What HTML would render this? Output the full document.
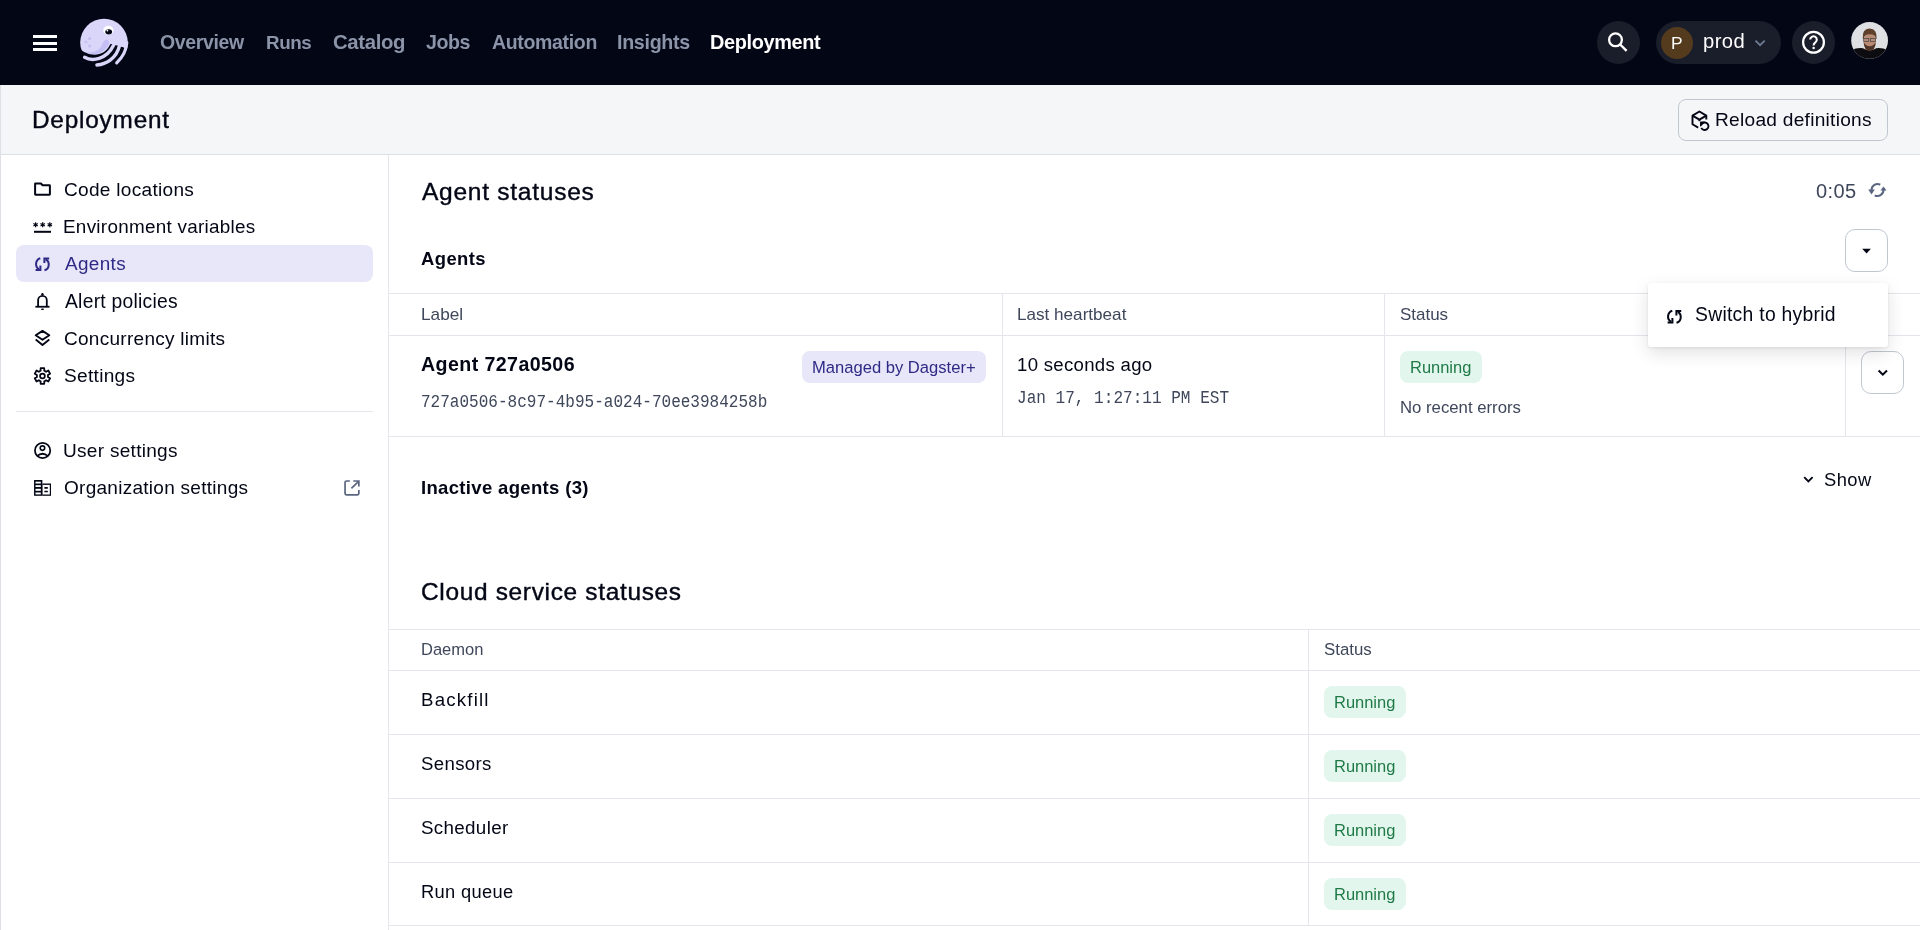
<!DOCTYPE html>
<html><head><meta charset="utf-8"><style>
html,body{margin:0;padding:0;width:1920px;height:930px;overflow:hidden;background:#fff}
.a{position:absolute}
.t{position:absolute;white-space:nowrap;will-change:transform}
.bm{display:inline-block;width:0;height:0;vertical-align:baseline}
svg{position:absolute;overflow:visible}
</style></head><body>
<div class="a" style="left:0px;top:0px;width:1920px;height:85px;background:#030615"></div>
<div class="a" style="left:33px;top:35px;width:24px;height:3px;background:#fff"></div>
<div class="a" style="left:33px;top:41.5px;width:24px;height:3px;background:#fff"></div>
<div class="a" style="left:33px;top:48px;width:24px;height:3px;background:#fff"></div>
<div class="a" style="left:1597px;top:21px;width:43px;height:43px;background:#1a1d2a;border-radius:50%"></div>
<div class="a" style="left:1656px;top:21px;width:125px;height:43px;background:#1a1d2a;border-radius:22px"></div>
<div class="a" style="left:1661px;top:27px;width:32px;height:32px;background:#553b1e;border-radius:50%"></div>
<div class="a" style="left:1792px;top:21px;width:43px;height:43px;background:#1a1d2a;border-radius:50%"></div>
<div class="a" style="left:0px;top:85px;width:1920px;height:69px;background:#f5f6f8"></div>
<div class="a" style="left:0px;top:154px;width:1920px;height:1px;background:#dcdfe5"></div>
<div class="a" style="left:0px;top:85px;width:1px;height:845px;background:#dfe0e5"></div>
<div class="a" style="left:1678px;top:99px;width:210px;height:42px;border:1px solid #c1c7d1;border-radius:8px;box-sizing:border-box"></div>
<div class="a" style="left:388px;top:155px;width:1px;height:775px;background:#e4e6eb"></div>
<div class="a" style="left:16px;top:245px;width:357px;height:37px;background:#e8e6f9;border-radius:8px"></div>
<div class="a" style="left:16px;top:411px;width:357px;height:1px;background:#e4e6eb"></div>
<div class="a" style="left:389px;top:293px;width:1531px;height:1px;background:#e4e6eb"></div>
<div class="a" style="left:389px;top:335px;width:1531px;height:1px;background:#e4e6eb"></div>
<div class="a" style="left:389px;top:436px;width:1531px;height:1px;background:#e4e6eb"></div>
<div class="a" style="left:1002px;top:294px;width:1px;height:142px;background:#e4e6eb"></div>
<div class="a" style="left:1384px;top:294px;width:1px;height:142px;background:#e4e6eb"></div>
<div class="a" style="left:1845px;top:294px;width:1px;height:142px;background:#e4e6eb"></div>
<div class="a" style="left:1845px;top:229px;width:43px;height:43px;border:1px solid #c1c7d1;border-radius:10px;box-sizing:border-box"></div>
<div class="a" style="left:1861px;top:351px;width:43px;height:43px;border:1px solid #c1c7d1;border-radius:10px;box-sizing:border-box"></div>
<div class="a" style="left:802px;top:351px;width:184px;height:32px;background:#e8e6f9;border-radius:8px"></div>
<div class="a" style="left:1400px;top:351px;width:82px;height:32px;background:#e3f6ee;border-radius:8px"></div>
<div class="a" style="left:389px;top:629px;width:1531px;height:1px;background:#e4e6eb"></div>
<div class="a" style="left:389px;top:670px;width:1531px;height:1px;background:#e4e6eb"></div>
<div class="a" style="left:389px;top:734px;width:1531px;height:1px;background:#e4e6eb"></div>
<div class="a" style="left:389px;top:798px;width:1531px;height:1px;background:#e4e6eb"></div>
<div class="a" style="left:389px;top:862px;width:1531px;height:1px;background:#e4e6eb"></div>
<div class="a" style="left:389px;top:925px;width:1531px;height:1px;background:#e4e6eb"></div>
<div class="a" style="left:1308px;top:630px;width:1px;height:295px;background:#e4e6eb"></div>
<div class="a" style="left:1324px;top:686px;width:82px;height:32px;background:#e3f6ee;border-radius:8px"></div>
<div class="a" style="left:1324px;top:750px;width:82px;height:32px;background:#e3f6ee;border-radius:8px"></div>
<div class="a" style="left:1324px;top:814px;width:82px;height:32px;background:#e3f6ee;border-radius:8px"></div>
<div class="a" style="left:1324px;top:878px;width:82px;height:32px;background:#e3f6ee;border-radius:8px"></div>
<div class="a" style="left:1648px;top:283px;width:240px;height:64px;background:#fff;border-radius:3px;box-shadow:0 1px 3px rgba(3,6,21,0.08),0 6px 18px rgba(3,6,21,0.12)"></div>
<div class="t" id="nav_overview" style="left:160.02px;top:29.90px;font-family:'Liberation Sans';font-weight:700;font-size:19.48px;line-height:24px;color:#8b94a8;letter-spacing:-0.357px">Overview<span class="bm"></span></div>
<div class="t" id="nav_runs" style="left:266.28px;top:30.90px;font-family:'Liberation Sans';font-weight:700;font-size:18.79px;line-height:23px;color:#8b94a8;letter-spacing:-0.436px">Runs<span class="bm"></span></div>
<div class="t" id="nav_catalog" style="left:332.94px;top:29.90px;font-family:'Liberation Sans';font-weight:700;font-size:20.34px;line-height:25px;color:#8b94a8;letter-spacing:-0.352px">Catalog<span class="bm"></span></div>
<div class="t" id="nav_jobs" style="left:426.36px;top:29.90px;font-family:'Liberation Sans';font-weight:700;font-size:19.65px;line-height:25px;color:#8b94a8;letter-spacing:-0.433px">Jobs<span class="bm"></span></div>
<div class="t" id="nav_automation" style="left:491.91px;top:29.90px;font-family:'Liberation Sans';font-weight:700;font-size:19.52px;line-height:24px;color:#8b94a8;letter-spacing:-0.345px">Automation<span class="bm"></span></div>
<div class="t" id="nav_insights" style="left:616.62px;top:29.90px;font-family:'Liberation Sans';font-weight:700;font-size:19.66px;line-height:25px;color:#8b94a8;letter-spacing:-0.304px">Insights<span class="bm"></span></div>
<div class="t" id="nav_deployment" style="left:709.61px;top:29.91px;font-family:'Liberation Sans';font-weight:700;font-size:19.91px;line-height:25px;color:#ffffff;letter-spacing:-0.363px">Deployment<span class="bm"></span></div>
<div class="t" id="prod" style="left:1702.58px;top:29.21px;font-family:'Liberation Sans';font-weight:400;font-size:20.23px;line-height:25px;color:#ffffff;letter-spacing:0.390px">prod<span class="bm"></span></div>
<div class="t" id="P" style="left:1671.31px;top:32.00px;font-family:'Liberation Sans';font-weight:400;font-size:17.36px;line-height:22px;color:#ffffff">P<span class="bm"></span></div>
<div class="t" id="title" style="left:31.66px;top:105.00px;font-family:'Liberation Sans';font-weight:400;font-size:24.30px;line-height:30px;color:#030615;letter-spacing:0.825px;-webkit-text-stroke:0.4px #030615">Deployment<span class="bm"></span></div>
<div class="t" id="reload" style="left:1715.07px;top:108.41px;font-family:'Liberation Sans';font-weight:400;font-size:19.13px;line-height:24px;color:#030615;letter-spacing:0.272px">Reload definitions<span class="bm"></span></div>
<div class="t" id="s_code" style="left:63.55px;top:177.91px;font-family:'Liberation Sans';font-weight:400;font-size:19.06px;line-height:24px;color:#030615;letter-spacing:0.296px">Code locations<span class="bm"></span></div>
<div class="t" id="s_env" style="left:62.99px;top:214.61px;font-family:'Liberation Sans';font-weight:400;font-size:18.87px;line-height:24px;color:#030615;letter-spacing:0.285px">Environment variables<span class="bm"></span></div>
<div class="t" id="s_agents" style="left:64.50px;top:251.71px;font-family:'Liberation Sans';font-weight:400;font-size:18.90px;line-height:24px;color:#2e2a85;letter-spacing:0.360px">Agents<span class="bm"></span></div>
<div class="t" id="s_alert" style="left:64.50px;top:289.90px;font-family:'Liberation Sans';font-weight:400;font-size:19.30px;line-height:24px;color:#030615;letter-spacing:0.258px">Alert policies<span class="bm"></span></div>
<div class="t" id="s_conc" style="left:63.55px;top:326.91px;font-family:'Liberation Sans';font-weight:400;font-size:19.01px;line-height:24px;color:#030615;letter-spacing:0.281px">Concurrency limits<span class="bm"></span></div>
<div class="t" id="s_settings" style="left:63.55px;top:364.01px;font-family:'Liberation Sans';font-weight:400;font-size:19.10px;line-height:24px;color:#030615;letter-spacing:0.298px">Settings<span class="bm"></span></div>
<div class="t" id="s_user" style="left:62.88px;top:439.00px;font-family:'Liberation Sans';font-weight:400;font-size:19.06px;line-height:24px;color:#030615;letter-spacing:0.281px">User settings<span class="bm"></span></div>
<div class="t" id="s_org" style="left:63.55px;top:476.01px;font-family:'Liberation Sans';font-weight:400;font-size:19.00px;line-height:24px;color:#030615;letter-spacing:0.274px">Organization settings<span class="bm"></span></div>
<div class="t" id="h_agentstat" style="left:421.80px;top:176.21px;font-family:'Liberation Sans';font-weight:400;font-size:24.56px;line-height:31px;color:#030615;letter-spacing:0.723px;-webkit-text-stroke:0.4px #030615">Agent statuses<span class="bm"></span></div>
<div class="t" id="timer" style="left:1815.95px;top:178.70px;font-family:'Liberation Sans';font-weight:400;font-size:20.03px;line-height:25px;color:#3f475b;letter-spacing:0.384px">0:05<span class="bm"></span></div>
<div class="t" id="h_agents" style="left:421.25px;top:246.60px;font-family:'Liberation Sans';font-weight:700;font-size:18.40px;line-height:23px;color:#030615;letter-spacing:0.443px">Agents<span class="bm"></span></div>
<div class="t" id="th_label" style="left:421.02px;top:302.80px;font-family:'Liberation Sans';font-weight:400;font-size:17.22px;line-height:22px;color:#3f475b">Label<span class="bm"></span></div>
<div class="t" id="th_hb" style="left:1016.63px;top:303.81px;font-family:'Liberation Sans';font-weight:400;font-size:17.12px;line-height:21px;color:#3f475b">Last heartbeat<span class="bm"></span></div>
<div class="t" id="th_status" style="left:1399.90px;top:303.81px;font-family:'Liberation Sans';font-weight:400;font-size:16.98px;line-height:21px;color:#3f475b">Status<span class="bm"></span></div>
<div class="t" id="agent_name" style="left:421.31px;top:352.01px;font-family:'Liberation Sans';font-weight:700;font-size:19.63px;line-height:25px;color:#030615;letter-spacing:0.410px">Agent 727a0506<span class="bm"></span></div>
<div class="t" id="uuid" style="left:421.02px;top:392.92px;font-family:'Liberation Mono';font-weight:400;font-size:16.04px;line-height:20px;color:#3f475b;transform:scaleY(1.09);transform-origin:0 14.27px">727a0506-8c97-4b95-a024-70ee3984258b<span class="bm"></span></div>
<div class="t" id="managed" style="left:811.57px;top:357.22px;font-family:'Liberation Sans';font-weight:400;font-size:16.59px;line-height:21px;color:#2e2a85">Managed by Dagster+<span class="bm"></span></div>
<div class="t" id="ago" style="left:1016.61px;top:353.01px;font-family:'Liberation Sans';font-weight:400;font-size:18.59px;line-height:23px;color:#030615;letter-spacing:0.307px">10 seconds ago<span class="bm"></span></div>
<div class="t" id="date" style="left:1016.55px;top:389.03px;font-family:'Liberation Mono';font-weight:400;font-size:16.07px;line-height:20px;color:#3f475b;transform:scaleY(1.09);transform-origin:0 14.28px">Jan 17, 1:27:11 PM EST<span class="bm"></span></div>
<div class="t" id="run1" style="left:1410.38px;top:356.91px;font-family:'Liberation Sans';font-weight:400;font-size:16.48px;line-height:21px;color:#1f7a47">Running<span class="bm"></span></div>
<div class="t" id="noerr" style="left:1399.66px;top:396.91px;font-family:'Liberation Sans';font-weight:400;font-size:16.74px;line-height:21px;color:#3f475b">No recent errors<span class="bm"></span></div>
<div class="t" id="switch" style="left:1694.53px;top:302.22px;font-family:'Liberation Sans';font-weight:400;font-size:19.34px;line-height:24px;color:#030615;letter-spacing:0.277px">Switch to hybrid<span class="bm"></span></div>
<div class="t" id="inactive" style="left:420.70px;top:475.51px;font-family:'Liberation Sans';font-weight:700;font-size:18.55px;line-height:23px;color:#030615;letter-spacing:0.322px">Inactive agents (3)<span class="bm"></span></div>
<div class="t" id="show" style="left:1824.28px;top:468.01px;font-family:'Liberation Sans';font-weight:400;font-size:18.33px;line-height:23px;color:#030615;letter-spacing:0.463px">Show<span class="bm"></span></div>
<div class="t" id="cloud" style="left:420.78px;top:575.71px;font-family:'Liberation Sans';font-weight:400;font-size:24.45px;line-height:31px;color:#030615;letter-spacing:0.676px;-webkit-text-stroke:0.4px #030615">Cloud service statuses<span class="bm"></span></div>
<div class="t" id="th_daemon" style="left:420.88px;top:638.81px;font-family:'Liberation Sans';font-weight:400;font-size:16.53px;line-height:21px;color:#3f475b">Daemon<span class="bm"></span></div>
<div class="t" id="th_status2" style="left:1323.86px;top:639.21px;font-family:'Liberation Sans';font-weight:400;font-size:16.84px;line-height:21px;color:#3f475b">Status<span class="bm"></span></div>
<div class="t" id="backfill" style="left:420.91px;top:687.80px;font-family:'Liberation Sans';font-weight:400;font-size:18.67px;line-height:23px;color:#030615;letter-spacing:1.203px">Backfill<span class="bm"></span></div>
<div class="t" id="sensors" style="left:421.27px;top:751.80px;font-family:'Liberation Sans';font-weight:400;font-size:18.61px;line-height:23px;color:#030615;letter-spacing:0.344px">Sensors<span class="bm"></span></div>
<div class="t" id="scheduler" style="left:421.06px;top:815.81px;font-family:'Liberation Sans';font-weight:400;font-size:18.79px;line-height:23px;color:#030615;letter-spacing:0.323px">Scheduler<span class="bm"></span></div>
<div class="t" id="runqueue" style="left:420.54px;top:879.81px;font-family:'Liberation Sans';font-weight:400;font-size:18.30px;line-height:23px;color:#030615;letter-spacing:0.338px">Run queue<span class="bm"></span></div>
<div class="t" id="run2" style="left:1334.38px;top:692.01px;font-family:'Liberation Sans';font-weight:400;font-size:16.48px;line-height:21px;color:#1f7a47">Running<span class="bm"></span></div>
<div class="t" id="run3" style="left:1334.38px;top:756.01px;font-family:'Liberation Sans';font-weight:400;font-size:16.48px;line-height:21px;color:#1f7a47">Running<span class="bm"></span></div>
<div class="t" id="run4" style="left:1334.38px;top:820.01px;font-family:'Liberation Sans';font-weight:400;font-size:16.48px;line-height:21px;color:#1f7a47">Running<span class="bm"></span></div>
<div class="t" id="run5" style="left:1334.38px;top:884.01px;font-family:'Liberation Sans';font-weight:400;font-size:16.48px;line-height:21px;color:#1f7a47">Running<span class="bm"></span></div>
<svg style="left:76px;top:15px" width="56" height="56" viewBox="76 15 56 56"><g transform="translate(76 15)">
<circle cx="28" cy="27.5" r="23.8" fill="#d9d6fa"/>
<path d="M10 36.8 C16 40.8 26 40.5 32.5 30 C34 27 32.5 24.3 29.8 24.8 C27.5 25.3 27 28 25.5 31 C22 36.6 16 38.6 10 36.8 Z" fill="#c4bff4"/>
<circle cx="13.6" cy="23.5" r="1.5" fill="#c4bff4"/>
<circle cx="9.9" cy="27.1" r="1.5" fill="#c4bff4"/>
<circle cx="13.6" cy="31" r="1.5" fill="#c4bff4"/>
<ellipse cx="32.4" cy="15.3" rx="5.1" ry="4.6" fill="#fff"/>
<ellipse cx="32.7" cy="16.8" rx="3.4" ry="2.6" fill="#030615"/>
<circle cx="31.4" cy="15.6" r="0.9" fill="#fff"/>
<path d="M3 33 C11 41.5 28 43.5 34.2 29.3 Q35.5 28.4 36.5 29.6 L40 30.6 Q41.3 29.8 42.2 31.2 L46.2 32 Q47.3 31.5 48 33 L50 36 L60 36 L60 60 L-4 60 L-4 33 Z" fill="#030615"/>
<path d="M8.6 42.3 C16 46.6 30.5 44.8 37.4 30.6" stroke="#d9d6fa" stroke-width="3.4" fill="none" stroke-linecap="round"/>
<path d="M20.9 50 C30 49.5 40.5 43.5 43.6 30.4" stroke="#d9d6fa" stroke-width="3.4" fill="none" stroke-linecap="round"/>
<path d="M40.7 47.9 C45.5 43.2 50.3 37 50.8 27.5" stroke="#d9d6fa" stroke-width="3.2" fill="none" stroke-linecap="round"/>
</g></svg>
<svg style="left:1597px;top:21px" width="43" height="43" viewBox="1597 21 43 43"><circle cx="1615.5" cy="39.8" r="6.4" stroke="#fff" stroke-width="2.3" fill="none"/><path d="M1620.2 44.5 L1626.6 50.9" stroke="#fff" stroke-width="2.4" stroke-linecap="butt"/></svg>
<svg style="left:1750px;top:35px" width="20" height="15" viewBox="1750 35 20 15"><path d="M1755.5 40.6 L1760.1 45.1 L1764.7 40.6" stroke="#6e7a91" stroke-width="1.9" fill="none"/></svg>
<svg style="left:1797px;top:26px" width="33" height="33" viewBox="1797 26 33 33"><circle cx="1813.5" cy="42.25" r="10.4" stroke="#fff" stroke-width="2.2" fill="none"/><path d="M1810.2 39.6 A3.3 3.3 0 1 1 1815.4 42.3 C1814.1 43.1 1813.6 43.8 1813.6 45.6" stroke="#fff" stroke-width="2.1" fill="none"/><circle cx="1813.6" cy="48" r="1.25" fill="#fff"/></svg>
<svg style="left:1850px;top:21px" width="40" height="40" viewBox="1850 21 40 40"><defs><clipPath id="avc"><circle cx="1869.6" cy="40.4" r="18.4"/></clipPath></defs>
<g clip-path="url(#avc)"><rect x="1850" y="21" width="40" height="40" fill="#dfe0e3"/>
<ellipse cx="1869.6" cy="49.5" rx="4.8" ry="3.5" fill="#b08270"/>
<path d="M1849 51.5 Q1856 47.2 1863 48.2 Q1869.6 53 1876.2 48.2 Q1883 47.2 1890 51.5 V62 H1849 Z" fill="#0d0d11"/>
<ellipse cx="1869.7" cy="41.5" rx="6.3" ry="8" fill="#b98a74"/>
<path d="M1863.7 42.5 Q1864.2 50.6 1869.7 50.6 Q1875.2 50.6 1875.7 42.5 Q1873.5 46.2 1869.7 46.2 Q1866 46.2 1863.7 42.5 Z" fill="#4e3527"/>
<path d="M1862.8 39 Q1861.8 28.8 1869.6 28.6 Q1877.4 28.8 1876.6 39 L1875.8 39 Q1875.5 34.2 1869.7 34.2 Q1864 34.2 1863.7 39 Z" fill="#5e402b"/>
<rect x="1863.7" y="38.4" width="5" height="3" fill="none" stroke="#48484a" stroke-width="0.75"/>
<rect x="1870.6" y="38.4" width="5" height="3" fill="none" stroke="#48484a" stroke-width="0.75"/>
</g></svg>
<svg style="left:1686px;top:106px" width="30" height="30" viewBox="1686 106 30 30"><g transform="translate(1686 106)" stroke="#030615" stroke-width="1.9" fill="none" stroke-linejoin="round">
<path d="M20.3 13.6 V9.6 L13.4 5.5 L6.5 9.6 V18.3 L12.2 21.6"/>
<path d="M6.5 9.6 L13.4 13.6 L20.3 9.6"/>
<path d="M13.4 13.6 V15.2"/>
<path d="M16 17.6 A3.75 3.75 0 1 1 15.3 21.8"/>
</g><path d="M1700.6 122.1 L1704.3 122.1 L1700.6 125.8 Z" fill="#030615" stroke="#030615" stroke-width="1.2" stroke-linejoin="round"/></svg>
<svg style="left:1860px;top:176px" width="32" height="28" viewBox="1860 176 32 28"><path d="M1880.32 184.70 A6.0 6.0 0 0 0 1871.50 190.00" stroke="#5a6680" stroke-width="2" fill="none"/>
<path d="M1868.2 189.6 L1874.8 189.6 L1871.5 194.4 Z" fill="#5a6680"/>
<path d="M1874.68 195.30 A6.0 6.0 0 0 0 1883.50 190.00" stroke="#5a6680" stroke-width="2" fill="none"/>
<path d="M1880.4 190.6 L1886.6 190.6 L1883.5 186.4 Z" fill="#5a6680"/></svg>
<svg style="left:1855px;top:240px" width="20" height="20" viewBox="1855 240 20 20"><path d="M1862.2 248.7 L1870.9 248.7 L1866.55 253.4 Z" fill="#030615"/></svg>
<svg style="left:1872px;top:362px" width="20" height="20" viewBox="1872 362 20 20"><path d="M1878.6 370.5 L1882.8 374.7 L1887 370.5" stroke="#030615" stroke-width="2" fill="none"/></svg>
<svg style="left:1798px;top:470px" width="20" height="20" viewBox="1798 470 20 20"><path d="M1804.2 477.1 L1808.4 481.3 L1812.6 477.1" stroke="#030615" stroke-width="1.9" fill="none"/></svg>
<svg style="left:30px;top:252px" width="24" height="24" viewBox="30 252 24 24"><g transform="translate(35 257) scale(1.0)" stroke="#2e2a85" stroke-width="2" fill="none">
<path d="M5.3 1.3 A6 6 0 0 0 4 12.2"/>
<path d="M5.4 8.6 V13.1 H0.6" stroke-linejoin="miter"/>
<path d="M9.5 13.3 A6 6 0 0 0 10.8 2.4"/>
<path d="M9.4 5.9 V1.4 H14.2" stroke-linejoin="miter"/>
</g></svg>
<svg style="left:1662px;top:305px" width="24" height="24" viewBox="1662 305 24 24"><g transform="translate(1667 309.5) scale(1.0)" stroke="#030615" stroke-width="2" fill="none">
<path d="M5.3 1.3 A6 6 0 0 0 4 12.2"/>
<path d="M5.4 8.6 V13.1 H0.6" stroke-linejoin="miter"/>
<path d="M9.5 13.3 A6 6 0 0 0 10.8 2.4"/>
<path d="M9.4 5.9 V1.4 H14.2" stroke-linejoin="miter"/>
</g></svg>
<svg style="left:30px;top:178px" width="26" height="22" viewBox="30 178 26 22"><path d="M35.1 184.5 V183.8 Q35.1 183.5 35.5 183.5 H40.9 L42.6 185.3 H49.5 Q49.9 185.3 49.9 185.7 V194.3 Q49.9 194.7 49.5 194.7 H35.5 Q35.1 194.7 35.1 194.3 Z" stroke="#030615" stroke-width="2" fill="none" stroke-linejoin="round"/></svg>
<svg style="left:30px;top:216px" width="26" height="20" viewBox="30 216 26 20"><path d="M35.60 227.30 L35.60 222.30" stroke="#030615" stroke-width="1.25"/><path d="M37.77 226.05 L33.43 223.55" stroke="#030615" stroke-width="1.25"/><path d="M33.43 226.05 L37.77 223.55" stroke="#030615" stroke-width="1.25"/><path d="M42.70 227.30 L42.70 222.30" stroke="#030615" stroke-width="1.25"/><path d="M44.87 226.05 L40.53 223.55" stroke="#030615" stroke-width="1.25"/><path d="M40.53 226.05 L44.87 223.55" stroke="#030615" stroke-width="1.25"/><path d="M49.80 227.30 L49.80 222.30" stroke="#030615" stroke-width="1.25"/><path d="M51.97 226.05 L47.63 223.55" stroke="#030615" stroke-width="1.25"/><path d="M47.63 226.05 L51.97 223.55" stroke="#030615" stroke-width="1.25"/><rect x="34" y="230.8" width="17" height="2" fill="#030615"/></svg>
<svg style="left:30px;top:288px" width="26" height="26" viewBox="30 288 26 26"><path d="M38.1 306.7 V300.3 A4.35 4.35 0 0 1 46.8 300.3 V306.7" stroke="#030615" stroke-width="1.8" fill="none"/>
<path d="M35.4 306.75 H49.5" stroke="#030615" stroke-width="1.8"/>
<circle cx="42.45" cy="294.3" r="1.2" fill="#030615"/>
<rect x="41.2" y="308.4" width="2.6" height="1.6" rx="0.6" fill="#030615"/></svg>
<svg style="left:30px;top:326px" width="26" height="24" viewBox="30 326 26 24"><path d="M42.5 330.9 L49.3 335.3 L42.5 339.7 L35.7 335.3 Z" stroke="#030615" stroke-width="1.9" fill="none" stroke-linejoin="round"/>
<path d="M35.7 339.5 L42.5 344.9 L49.3 339.5" stroke="#030615" stroke-width="1.9" fill="none" stroke-linejoin="round"/></svg>
<svg style="left:30px;top:362px" width="26" height="28" viewBox="30 362 26 28"><path d="M39.64 371.15 L40.62 370.71 L40.64 368.21 L44.24 368.21 L44.26 370.71 L45.24 371.15 L46.11 371.77 L48.29 370.54 L50.09 373.66 L47.94 374.93 L48.04 376.00 L47.94 377.07 L50.09 378.34 L48.29 381.46 L46.11 380.23 L45.24 380.85 L44.26 381.29 L44.24 383.79 L40.64 383.79 L40.62 381.29 L39.64 380.85 L38.77 380.23 L36.59 381.46 L34.79 378.34 L36.94 377.07 L36.84 376.00 L36.94 374.93 L34.79 373.66 L36.59 370.54 L38.77 371.77 Z" stroke="#030615" stroke-width="1.8" fill="none" stroke-linejoin="round"/><circle cx="42.44" cy="376.0" r="2.4" stroke="#030615" stroke-width="1.7" fill="none"/></svg>
<svg style="left:30px;top:438px" width="26" height="26" viewBox="30 438 26 26"><circle cx="42.6" cy="450.45" r="7.65" stroke="#030615" stroke-width="1.75" fill="none"/>
<circle cx="42.45" cy="448.1" r="2.25" stroke="#030615" stroke-width="1.6" fill="none"/>
<path d="M37 456.2 Q42.5 451.3 48.1 456.2" stroke="#030615" stroke-width="1.7" fill="none"/></svg>
<svg style="left:30px;top:474px" width="26" height="26" viewBox="30 474 26 26"><rect x="34.05" y="480" width="8.3" height="15.8" fill="#030615"/>
<rect x="35.5" y="481.7" width="5.3" height="1.8" fill="#fff"/>
<rect x="35.5" y="485.2" width="5.3" height="1.8" fill="#fff"/>
<rect x="35.5" y="488.8" width="5.3" height="2" fill="#fff"/>
<rect x="35.5" y="492.5" width="5.3" height="1.9" fill="#fff"/>
<rect x="42.3" y="483.5" width="8.7" height="12.3" fill="#030615"/>
<rect x="42.7" y="484.9" width="7.1" height="9.6" fill="#fff"/>
<rect x="44.3" y="487.1" width="3.6" height="1.6" rx="0.5" fill="#030615"/>
<rect x="44.3" y="490.8" width="3.6" height="1.5" rx="0.5" fill="#030615"/></svg>
<svg style="left:340px;top:475px" width="26" height="26" viewBox="340 475 26 26"><g stroke="#5a6680" stroke-width="1.7" fill="none">
<path d="M349.9 481 H346.6 A1.5 1.5 0 0 0 345.05 482.5 V493.35 A1.5 1.5 0 0 0 346.55 494.85 H357.35 A1.5 1.5 0 0 0 358.85 493.35 V490.1"/>
<path d="M353.3 481 H358.85 V486.6"/>
<path d="M358.3 481.6 L351.4 488.4"/></g></svg>
</body></html>
